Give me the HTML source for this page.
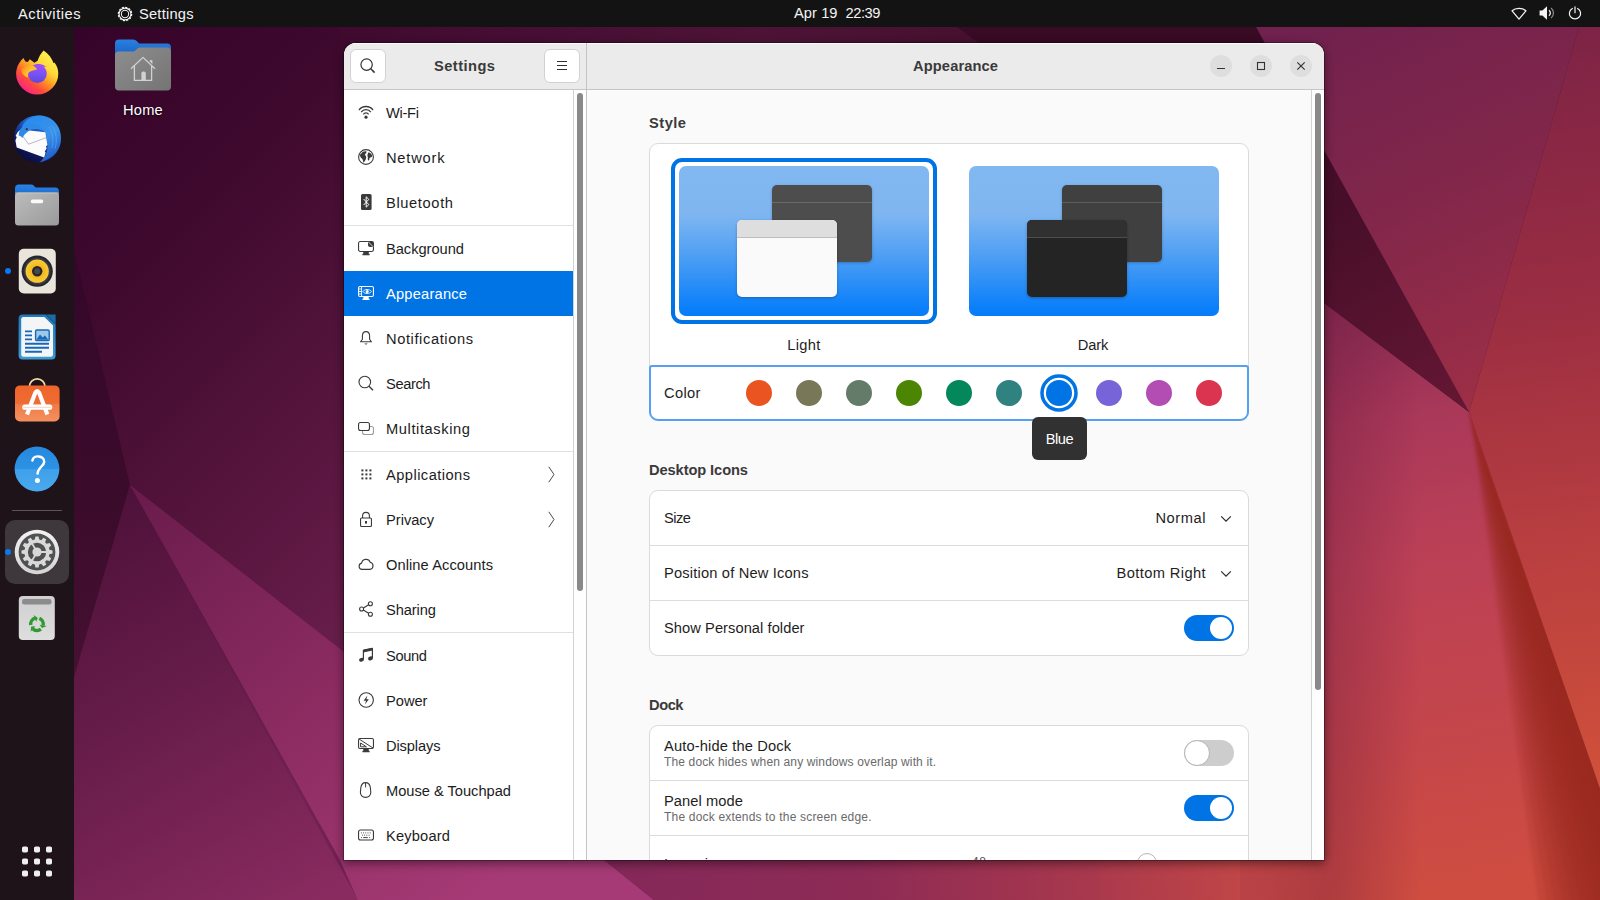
<!DOCTYPE html>
<html lang="en">
<head>
<meta charset="utf-8">
<title>Settings - Appearance</title>
<style>
*{box-sizing:border-box;margin:0;padding:0}
html,body{width:1600px;height:900px;overflow:hidden;background:#3a0a2c}
body{position:relative;font-family:"Liberation Sans",sans-serif;color:#1e1e1e;font-size:14.67px}
.abs{position:absolute}
.f{white-space:nowrap;display:inline-block}
#wall{position:absolute;left:0;top:0;width:1600px;height:900px}
/* ---------- top bar ---------- */
#topbar{position:absolute;left:0;top:0;width:1600px;height:27px;background:#131313;color:#f4f4f4}
#topbar .tx{position:absolute;top:0;height:27px;line-height:28px;white-space:nowrap}
#topbar svg{position:absolute}
/* ---------- dock ---------- */
#dock{position:absolute;left:0;top:27px;width:74px;height:873px;background:#1d1319}
#dock svg{position:absolute;overflow:visible}
.dot{position:absolute;left:5px;width:6px;height:6px;border-radius:50%;background:#0a78ee}
/* desktop icon */
#home{position:absolute;left:100px;top:36px;width:86px;height:90px}
/* ---------- window ---------- */
#shadow{position:absolute;left:344px;top:43px;width:980px;height:817px;border-radius:12px 12px 0 0;box-shadow:0 3px 10px 1px rgba(0,0,0,.42),0 0 0 1px rgba(0,0,0,.3)}
#win{position:absolute;left:344px;top:43px;width:980px;height:817px;border-radius:12px 12px 0 0;overflow:hidden;background:#fafafa}
#hdr{position:absolute;left:0;top:0;width:980px;height:47px;background:#ebebeb;border-bottom:1px solid #c6c6c6;box-shadow:inset 0 1px 0 #fcfcfc}
.hbtn{position:absolute;top:6px;width:36px;height:34px;background:#fff;border:1px solid #d2d2d2;border-radius:6px}
.hbtn svg{position:absolute;left:9px;top:8px}
.wbtn{position:absolute;top:12px;width:22px;height:22px;border-radius:50%;background:#dedede}
.wbtn svg{position:absolute;left:3px;top:3px}
.ttl{position:absolute;top:0;height:46px;line-height:47px;font-weight:bold;color:#3a3a3a;white-space:nowrap}
/* sidebar */
#side{position:absolute;left:0;top:47px;width:229px;height:770px;background:#fff}
#sbar{position:absolute;left:229px;top:47px;width:13px;height:770px;background:#fefefe;border-left:1px solid #d2d2d2}
#vdiv{position:absolute;left:242px;top:0;width:1px;height:817px;background:#c3c3c3}
.row{position:absolute;left:0;width:229px;height:45px}
.row .t{position:absolute;left:42px;top:0;height:45px;line-height:46px;white-space:nowrap;color:#1c1c1c}
.row svg.i{position:absolute;left:14px;top:14px;width:16px;height:16px;overflow:visible}
.row.sel{background:#0073e5}
.row.sel .t{color:#fff}
.sep{position:absolute;left:0;width:229px;height:1px;background:#e0e0e0}
.row svg.chev{position:absolute;left:204px;top:14px;width:7px;height:17px;overflow:visible}
/* content */
#main{position:absolute;left:243px;top:47px;width:737px;height:770px;background:#fafafa;overflow:hidden}
#mbar{position:absolute;left:724px;top:0;width:13px;height:770px;border-left:1px solid #d2d2d2;background:#fefefe}
.h2{position:absolute;left:62px;font-weight:bold;color:#3a3a3a;white-space:nowrap;height:20px;line-height:20px}
.card{position:absolute;left:62px;width:600px;background:#fff;border:1px solid #dadada;border-radius:9px}
.crow{position:absolute;left:0;width:598px;height:55px}
.crow .l{position:absolute;left:14px;top:0;height:55px;line-height:54px;white-space:nowrap}
.crow .l1{position:absolute;left:14px;top:11px;height:18px;line-height:18px;white-space:nowrap}
.crow .l2{position:absolute;left:14px;top:28px;height:16px;line-height:16px;white-space:nowrap;color:#6a6a6a;font-size:12px}
.crow .r{position:absolute;right:42px;top:0;height:55px;line-height:54px;white-space:nowrap}
.csep{position:absolute;left:0;width:598px;height:1px;background:#dcdcdc}
.sw{position:absolute;left:534px;width:50px;height:26px;border-radius:13px}
.sw.on{background:#0073e5}
.sw.on i{position:absolute;left:26px;top:2px;width:22px;height:22px;border-radius:50%;background:#fff}
.sw.off{background:#cdcdcd}
.sw.off i{position:absolute;left:0;top:0;width:26px;height:26px;border-radius:50%;background:#fff;border:1px solid #b4b4b4}
.cc{position:absolute;top:13px;width:26.6px;height:26.6px;margin:-.3px 0 0 -.3px;border-radius:50%}
.thumb{position:absolute;top:22px;width:250px;height:150px;border-radius:7px;background:linear-gradient(#81b8f1 0%,#7fb6f1 32%,#4a9df4 62%,#0a7ffa 95%,#067cf8 100%);overflow:hidden}
.thumb b{position:absolute;display:block;border-radius:5px;overflow:hidden}
</style>
</head>
<body>
<svg id="wall" viewBox="0 0 1600 900">
<defs>
<linearGradient id="gLB" gradientUnits="userSpaceOnUse" x1="74" y1="27" x2="574" y2="527"><stop offset="0" stop-color="#350329"/><stop offset=".3" stop-color="#3f092e"/><stop offset=".55" stop-color="#501239"/><stop offset=".84" stop-color="#651c48"/><stop offset="1" stop-color="#712250"/></linearGradient>
<linearGradient id="gLA" gradientUnits="userSpaceOnUse" x1="60" y1="200" x2="90" y2="800"><stop offset="0" stop-color="#32062a"/><stop offset=".5" stop-color="#3b0b2b"/><stop offset="1" stop-color="#4e1438"/></linearGradient>
<linearGradient id="gLC" gradientUnits="userSpaceOnUse" x1="130" y1="485" x2="480" y2="900"><stop offset="0" stop-color="#691b4c"/><stop offset=".5" stop-color="#8a2b60"/><stop offset="1" stop-color="#a63a76"/></linearGradient>
<linearGradient id="gLD" gradientUnits="userSpaceOnUse" x1="90" y1="480" x2="330" y2="900"><stop offset="0" stop-color="#4b1037"/><stop offset=".5" stop-color="#681d4a"/><stop offset="1" stop-color="#8a2b60"/></linearGradient>
<linearGradient id="gBT" gradientUnits="userSpaceOnUse" x1="600" y1="880" x2="1340" y2="880"><stop offset="0" stop-color="#84285a"/><stop offset=".35" stop-color="#8d2b55"/><stop offset=".62" stop-color="#a4364e"/><stop offset=".85" stop-color="#bc4448" stop-opacity=".9"/><stop offset="1" stop-color="#c64945" stop-opacity="0"/></linearGradient>
<linearGradient id="gTOP" gradientUnits="userSpaceOnUse" x1="340" y1="0" x2="1260" y2="0"><stop offset="0" stop-color="#400a2f"/><stop offset=".45" stop-color="#4d1337"/><stop offset=".72" stop-color="#45102d"/><stop offset="1" stop-color="#370a22"/></linearGradient>
<linearGradient id="gR1" gradientUnits="userSpaceOnUse" x1="1300" y1="27" x2="1480" y2="420"><stop offset="0" stop-color="#70214e"/><stop offset=".5" stop-color="#83274a"/><stop offset="1" stop-color="#9f2f46"/></linearGradient>
<linearGradient id="gR2" gradientUnits="userSpaceOnUse" x1="1540" y1="27" x2="1640" y2="800"><stop offset="0" stop-color="#7d2346"/><stop offset=".35" stop-color="#9a2d42"/><stop offset=".65" stop-color="#b83e40"/><stop offset="1" stop-color="#d2523a"/></linearGradient>
<linearGradient id="gR3" gradientUnits="userSpaceOnUse" x1="1260" y1="40" x2="1460" y2="410"><stop offset="0" stop-color="#380a23"/><stop offset=".5" stop-color="#4a0f2a"/><stop offset="1" stop-color="#641733"/></linearGradient>
<linearGradient id="gR4" gradientUnits="userSpaceOnUse" x1="1330" y1="290" x2="1440" y2="900"><stop offset="0" stop-color="#852951"/><stop offset=".22" stop-color="#a93859"/><stop offset=".45" stop-color="#bb4056"/><stop offset=".75" stop-color="#c5464a"/><stop offset="1" stop-color="#cf4d40"/></linearGradient>
<linearGradient id="gR4h" gradientUnits="userSpaceOnUse" x1="1324" y1="0" x2="1420" y2="0"><stop offset="0" stop-color="#5a1238" stop-opacity=".3"/><stop offset="1" stop-color="#5a1238" stop-opacity="0"/></linearGradient>
<linearGradient id="gR5" gradientUnits="userSpaceOnUse" x1="1534" y1="600" x2="1470" y2="622"><stop offset="0" stop-color="#98281f"/><stop offset=".35" stop-color="#a22c26" stop-opacity=".9"/><stop offset="1" stop-color="#b8383a" stop-opacity="0"/></linearGradient>
<filter id="soft2" color-interpolation-filters="sRGB" x="-30%" y="-10%" width="160%" height="120%"><feGaussianBlur stdDeviation="7"/></filter>
<filter id="soft3" color-interpolation-filters="sRGB" x="-20%" y="-5%" width="140%" height="110%"><feGaussianBlur stdDeviation="1.6"/></filter>
<filter id="soft" color-interpolation-filters="sRGB" x="-5%" y="-5%" width="110%" height="110%"><feGaussianBlur stdDeviation="0.7"/></filter>
</defs>
<rect width="1600" height="900" fill="#4a1033"/>
<g filter="url(#soft)">
<!-- upper-middle large dark facet -->
<polygon points="22,27 1260,27 1260,1000 130,1000 130,485" fill="url(#gLB)"/>
<rect x="340" y="20" width="930" height="60" fill="url(#gTOP)"/>
<!-- far-left dark facet -->
<polygon points="0,27 22,27 130,485 0,937" fill="url(#gLA)"/>
<!-- lower-left facet -->
<polygon points="130,485 -20,1000 420,1000 358,900" fill="url(#gLD)"/>
<!-- light wedge -->
<polygon points="130,485 344,652 604,860 660,905 360,905 340,860" fill="url(#gLC)"/>
<!-- right: pink lower-left facet -->
<polygon points="1100,134.6 1469,412 1620,846 1620,1000 1100,1000" fill="url(#gR4)"/>
<polygon points="1240,240 1469,412 1600,1000 1240,1000" fill="url(#gR4h)"/>
<!-- bottom strip right of wedge -->
<polygon points="604,860 660,905 1340,905 1340,856" fill="url(#gBT)"/>
</g>
<!-- right: dark-red band (soft left edge) -->
<g filter="url(#soft3)" fill="#96261d" fill-opacity=".2"><polygon points="1469,412 1558.8,1045.7 1683.3,1015.1"/><polygon points="1469,412 1569.0,1044.1 1683.3,1015.1"/><polygon points="1469,412 1579.2,1042.4 1683.3,1015.1"/><polygon points="1469,412 1589.4,1040.6 1683.3,1015.1"/><polygon points="1469,412 1599.5,1038.6 1683.3,1015.1"/><polygon points="1469,412 1609.6,1036.4 1683.3,1015.1"/><polygon points="1469,412 1619.6,1034.0 1683.3,1015.1"/><polygon points="1469,412 1629.7,1031.5 1683.3,1015.1"/><polygon points="1469,412 1639.6,1028.8 1683.3,1015.1"/><polygon points="1469,412 1649.6,1026.0 1683.3,1015.1"/><polygon points="1469,412 1659.5,1023.0 1683.3,1015.1"/><polygon points="1469,412 1669.3,1019.9 1683.3,1015.1"/></g>
<g filter="url(#soft)">
<!-- right: dark triangle -->
<polygon points="1256,27 1469,412 900,-16 900,27" fill="url(#gR3)"/>
<!-- right: upper big facet -->
<polygon points="1256,27 1579,27 1469,412" fill="url(#gR1)"/>
<!-- right: far right facet -->
<polygon points="1579,27 1620,27 1620,846 1469,412" fill="url(#gR2)"/>
</g>
</svg>
<!-- TOP BAR -->
<div id="topbar">
<div class="tx" style="left:18px"><span class="f" style="font-size:14.67px;letter-spacing:0.519px;">Activities</span></div>
<svg style="left:116.5px;top:5.5px" width="16" height="16" viewBox="0 0 17 17"><circle cx="8.5" cy="8.5" r="7.1" fill="none" stroke="#f4f4f4" stroke-width="1.3" stroke-dasharray="2.3 1.417"/><circle cx="8.5" cy="8.5" r="6.3" fill="none" stroke="#f4f4f4" stroke-width="1.2"/><circle cx="8.5" cy="8.5" r="3.9" fill="none" stroke="#f4f4f4" stroke-width="1.1"/></svg>
<div class="tx" style="left:139px"><span class="f" style="font-size:14.67px;letter-spacing:0.219px;">Settings</span></div>
<div class="tx" style="left:794px;line-height:26px"><span class="f" style="font-size:14.67px;letter-spacing:0.062px;">Apr 19</span></div>
<div class="tx" style="left:845.5px;line-height:26px"><span class="f" style="font-size:14.67px;letter-spacing:-0.422px;">22:39</span></div>
<!-- network -->
<svg style="left:1511px;top:7px" width="16" height="13.3" viewBox="0 0 18 15"><path d="M1.2 4.3 C5.2 0.6 12.8 0.6 16.8 4.3 L9 13.6 Z" fill="none" stroke="#f4f4f4" stroke-width="1.4" stroke-linejoin="round"/></svg>
<!-- volume -->
<svg style="left:1539px;top:5px" width="16" height="16" viewBox="0 0 16 16"><path d="M0.6 5.4 H3.4 L8 1.2 V14.8 L3.4 10.6 H0.6 Z" fill="#f4f4f4"/><path d="M10 5.2 A3.6 3.6 0 0 1 10 10.8" fill="none" stroke="#f4f4f4" stroke-width="1.3"/><path d="M12 3 A6.3 6.3 0 0 1 12 13" fill="none" stroke="#8d8d8d" stroke-width="1.2"/></svg>
<!-- power -->
<svg style="left:1567.5px;top:5.5px" width="14" height="14" viewBox="0 0 15 15"><path d="M4.7 2.6 A6 6 0 1 0 10.3 2.6" fill="none" stroke="#f4f4f4" stroke-width="1.3" stroke-linecap="round"/><path d="M7.5 0.8 V7.2" stroke="#f4f4f4" stroke-width="1.3" stroke-linecap="round"/></svg>
</div>
<!-- DOCK -->
<div id="dock">
<!-- Firefox: abs 16..58 x 50..94 -->
<svg style="left:13px;top:22px" width="48" height="48" viewBox="0 0 48 48">
<defs>
<linearGradient id="ffg" x1=".86" y1=".12" x2=".22" y2=".95"><stop offset="0" stop-color="#fff350"/><stop offset=".3" stop-color="#ffd93a"/><stop offset=".52" stop-color="#ff9a22"/><stop offset=".74" stop-color="#ff4f38"/><stop offset="1" stop-color="#fb1f8c"/></linearGradient>
<linearGradient id="ffp" x1=".5" y1="0" x2=".45" y2="1"><stop offset="0" stop-color="#a94dff"/><stop offset=".5" stop-color="#7a52f4"/><stop offset="1" stop-color="#5a48e0"/></linearGradient>
<linearGradient id="ffo" x1="0" y1=".2" x2="1" y2=".8"><stop offset="0" stop-color="#ff8a20"/><stop offset=".5" stop-color="#ffc22e"/><stop offset="1" stop-color="#ffae26"/></linearGradient>
</defs>
<path d="M30.6 1.4 C27.6 4.6 25.6 8.2 24.6 11.8 L21.4 13.8 L16.8 10.2 L14.8 13 L12.4 12.4 L10.4 9 C7 12 4.6 16 3.7 20 C3.2 22 3.1 23.4 3.1 24.4 A21.1 21.1 0 0 0 45.3 24.4 C45.3 20 43.6 16 41.4 13.4 L40.6 14.2 C39 9.4 35.6 4.8 30.6 1.4Z" fill="url(#ffg)"/>
<circle cx="24.4" cy="24.6" r="9.4" fill="url(#ffp)"/>
<path d="M21 16.2 C24.6 14.2 29.6 14.6 33.4 18 C31 17.4 29 17.6 27.4 18.6Z" fill="#9b4dfa"/>
<path d="M8.4 20.6 C11.4 16.4 16.8 15.2 20.6 17 C22.2 17.9 23.4 19.1 24.2 20.4 C21.2 21 18.2 21.6 16.2 23 C14.8 24.4 14.6 26.6 15.2 28.8 C10.8 27.2 8 24.2 8.4 20.6Z" fill="url(#ffo)"/>
</svg>
<!-- Thunderbird: abs 13..61 x 115..163 -->
<svg style="left:13px;top:88px" width="48" height="48" viewBox="0 0 48 48">
<defs>
<linearGradient id="tbg" x1=".8" y1=".1" x2=".2" y2=".95"><stop offset="0" stop-color="#2f86e6"/><stop offset=".42" stop-color="#1c4fb8"/><stop offset=".72" stop-color="#10175e"/><stop offset="1" stop-color="#0a0c3a"/></linearGradient>
<linearGradient id="tbw" x1=".3" y1="0" x2=".8" y2="1"><stop offset="0" stop-color="#2a8cee"/><stop offset=".5" stop-color="#3a92ea"/><stop offset="1" stop-color="#1c55c4"/></linearGradient>
</defs>
<circle cx="24.3" cy="24" r="23.6" fill="url(#tbg)"/>
<path d="M9 17 C7.5 9.5 14 2 26 .6 C38.5 .4 48 10 47.9 23 C47.8 34.5 40 44.5 26.5 47.4 C32.6 42.4 35 36 34.4 29.8 C34 24 33.5 20 32.4 17.3 C27 13 20 12.5 14 15.5 Z" fill="url(#tbw)"/>
<path d="M4.7 16.9 L2.6 21 L3.8 22 L2.4 25.6 L3.7 32.4 L31.1 42.4 L32.6 37.8 L31.8 36.4 L33.6 33.4 L33 31.6 L34.4 29.8 L32.4 17.3 L7.9 14.4 Z" fill="#fcfcfd"/>
<path d="M6.6 16.9 L15.6 29.2 L33.1 22.7" fill="none" stroke="#a7a7b6" stroke-width=".8"/>
<path d="M5.6 20.6 C6 13.4 11.4 8.4 18.6 8.2 C24 8.2 28.4 11 30.8 15.6 C25.4 13.2 19.4 13.4 15 16.4 C12.4 18.2 10.6 20.4 9.4 23 C8.4 21.6 7 20.8 5.6 20.6Z" fill="#2c8bea"/>
<path d="M36 12 C40 18 41 26 39 33 M39 10.6 C43.6 17 44.4 26 42 33.6" fill="none" stroke="#55a8f2" stroke-width="1" opacity=".7"/>
<circle cx="13.8" cy="14.2" r="1.1" fill="#4a2a1c"/>
</svg>
<!-- Files: abs 15..59 x 184..226 -->
<svg style="left:13px;top:155px" width="48" height="48" viewBox="0 0 48 48">
<defs>
<linearGradient id="flb" x1="0" y1="0" x2="0" y2="1"><stop offset="0" stop-color="#2b83e4"/><stop offset="1" stop-color="#0d56b8"/></linearGradient>
<linearGradient id="flg" x1="0" y1="0" x2="1" y2="1"><stop offset="0" stop-color="#bcbcbc"/><stop offset="1" stop-color="#9a9a9a"/></linearGradient>
</defs>
<path d="M2 6.5 Q2 2.5 6 2.5 H17.6 Q19.8 2.5 21 3.8 L22.6 5.4 H42 Q46 5.4 46 9.4 V24 H2 Z" fill="url(#flb)"/>
<rect x="2" y="10.4" width="44" height="33.2" rx="3.6" fill="url(#flg)"/>
<rect x="2" y="10.4" width="44" height="1.2" rx=".6" fill="#d4c9b0" opacity=".8"/>
<rect x="17.8" y="17.6" width="12.4" height="3.6" rx="1.7" fill="#fafafa"/>
</svg>
<!-- Rhythmbox: abs 19..56 x 249..293 -->
<div class="dot" style="top:241px"></div>
<svg style="left:13px;top:220px" width="48" height="48" viewBox="0 0 48 48">
<defs>
<radialGradient id="rby" cx=".5" cy=".5" r=".5"><stop offset="0" stop-color="#e8a20c"/><stop offset=".55" stop-color="#f4bc20"/><stop offset="1" stop-color="#f8cc3a"/></radialGradient>
</defs>
<rect x="5.8" y="1.8" width="37" height="44.6" rx="5" fill="#e9e5da"/>
<circle cx="24.2" cy="24.2" r="15.6" fill="#26262e"/>
<circle cx="24.2" cy="24.2" r="13.4" fill="#3a3a44"/>
<circle cx="24.2" cy="24.2" r="11.6" fill="url(#rby)"/>
<circle cx="24.2" cy="24.2" r="5.2" fill="#25252b"/>
<circle cx="24.2" cy="24.2" r="3" fill="#46464c"/>
</svg>
<!-- Writer: abs 19..56 x 314..359 -->
<svg style="left:13px;top:286px" width="48" height="48" viewBox="0 0 48 48">
<defs>
<linearGradient id="wrb" x1="0" y1="0" x2="0" y2="1"><stop offset="0" stop-color="#1f7ab8"/><stop offset=".5" stop-color="#2a8ac8"/><stop offset="1" stop-color="#3a9ad4"/></linearGradient>
</defs>
<path d="M9.6 1.4 H32.6 L42.6 11.4 V42.4 Q42.6 46.4 38.6 46.4 H9.6 Q5.6 46.4 5.6 42.4 V5.4 Q5.6 1.4 9.6 1.4Z" fill="url(#wrb)"/>
<path d="M10.4 4 H31.4 L40 12.6 V41.6 Q40 43.8 37.8 43.8 H10.4 Q8.2 43.8 8.2 41.6 V6.2 Q8.2 4 10.4 4Z" fill="#f3f5f7"/>
<path d="M33 1.4 H42.6 V11 Z" fill="#1a6ca8"/>
<path d="M12 18.4 h7 M12 22.4 h7 M12 26.4 h7 M12 30.8 h24 M12 34.8 h24 M12 38.8 h17" stroke="#1868b8" stroke-width="1.9"/>
<rect x="22.6" y="17" width="13.6" height="10.6" rx="1.2" fill="#9cc8ea" stroke="#1868b8" stroke-width="1.4"/>
<path d="M23.4 26.8 L27 21.6 L29.6 24.6 L32 22.4 L35.4 26.8Z" fill="#1868b8"/>
</svg>
<!-- Software: abs 15..59.5 x 379..421 -->
<svg style="left:13px;top:350px" width="48" height="48" viewBox="0 0 48 48">
<defs>
<linearGradient id="swg" x1="0" y1="0" x2="0" y2="1"><stop offset="0" stop-color="#f0642a"/><stop offset=".5" stop-color="#ee6c34"/><stop offset=".52" stop-color="#f07a46"/><stop offset="1" stop-color="#f3915f"/></linearGradient>
</defs>
<path d="M16.4 11 V9.6 A7.8 7.8 0 0 1 32 9.6 V11" fill="none" stroke="#f6d9a4" stroke-width="1.8"/>
<rect x="2" y="8.4" width="44.6" height="36" rx="5" fill="url(#swg)"/>
<path d="M14 37.4 L22.4 15.6 Q24.2 12.6 26 15.6 L34.4 37.4" fill="none" stroke="#fdfdfd" stroke-width="4.2" stroke-linejoin="round"/>
<rect x="9.2" y="27.6" width="30" height="5.2" rx="2.6" fill="#fff"/>
<rect x="10.2" y="29.8" width="28" height="1" fill="#ead8ce"/>
</svg>
<!-- Help: abs center (37,469) r 22.4 -->
<svg style="left:13px;top:418px" width="48" height="48" viewBox="0 0 48 48">
<defs>
<linearGradient id="hpg" x1="0" y1="0" x2="0" y2="1"><stop offset="0" stop-color="#2788de"/><stop offset=".5" stop-color="#2c92e4"/><stop offset=".51" stop-color="#3f9fe9"/><stop offset="1" stop-color="#4aa9ee"/></linearGradient>
</defs>
<circle cx="24" cy="24" r="22.4" fill="url(#hpg)"/>
<path d="M19.4 15.4 C20 12.4 23 11.2 25.6 11.4 C29 11.6 31.4 13.8 31.2 16.8 C31 21 25 22.4 24.6 28.6" fill="none" stroke="#fff" stroke-width="2.5" stroke-linecap="round"/>
<circle cx="24.4" cy="35.6" r="2.5" fill="#fff"/>
</svg>
<!-- separator -->
<div class="abs" style="left:12px;top:483px;width:50px;height:1px;background:#5d545a"></div>
<!-- Settings (active) -->
<div class="abs" style="left:5px;top:493px;width:64px;height:64px;border-radius:10px;background:#3e373c"></div>
<div class="dot" style="top:522px"></div>
<svg style="left:13px;top:501px" width="48" height="48" viewBox="0 0 48 48">
<defs><linearGradient id="stw" x1="0" y1="0" x2="0" y2="1"><stop offset="0" stop-color="#f2f2f2"/><stop offset="1" stop-color="#d4d4d4"/></linearGradient></defs>
<circle cx="24" cy="24" r="22.3" fill="url(#stw)"/>
<circle cx="24" cy="24" r="18.4" fill="#515151"/>
<path d="M36.39 21.73 L39.52 22.43 L39.52 25.57 L36.39 26.27 L35.87 28.23 L38.23 30.40 L36.66 33.12 L33.60 32.16 L32.16 33.60 L33.12 36.66 L30.40 38.23 L28.23 35.87 L26.27 36.39 L25.57 39.52 L22.43 39.52 L21.73 36.39 L19.77 35.87 L17.60 38.23 L14.88 36.66 L15.84 33.60 L14.40 32.16 L11.34 33.12 L9.77 30.40 L12.13 28.23 L11.61 26.27 L8.48 25.57 L8.48 22.43 L11.61 21.73 L12.13 19.77 L9.77 17.60 L11.34 14.88 L14.40 15.84 L15.84 14.40 L14.88 11.34 L17.60 9.77 L19.77 12.13 L21.73 11.61 L22.43 8.48 L25.57 8.48 L26.27 11.61 L28.23 12.13 L30.40 9.77 L33.12 11.34 L32.16 14.40 L33.60 15.84 L36.66 14.88 L38.23 17.60 L35.87 19.77Z" fill="#d9d9d9"/>
<circle cx="24" cy="24" r="9.2" fill="#515151"/>
<path d="M24 24 L34 24 M24 24 L19 15.4 M24 24 L19 32.6" stroke="#d9d9d9" stroke-width="1.8"/>
<circle cx="24" cy="24" r="4.6" fill="#d9d9d9"/>
</svg>
<!-- Trash: abs 19..55 x 596..640 -->
<svg style="left:13px;top:567px" width="48" height="48" viewBox="0 0 48 48">
<defs><linearGradient id="trg" x1="0" y1="0" x2="0" y2="1"><stop offset="0" stop-color="#cfcfcf"/><stop offset="1" stop-color="#dedede"/></linearGradient></defs>
<rect x="5.8" y="2" width="36" height="44" rx="4" fill="url(#trg)"/>
<rect x="9" y="5" width="29.6" height="5.6" rx="2.4" fill="#8c8c8c"/>
<path d="M26.36 24.36 A6.3 6.3 0 0 1 30.16 31.51 M27.88 35.16 A6.3 6.3 0 0 1 19.78 34.88 M17.76 31.08 A6.3 6.3 0 0 1 22.05 24.21" fill="none" stroke="#2e9a30" stroke-width="3.4"/><path d="M28.96 34.08 L33.75 31.92 L26.66 30.67Z M18.16 32.56 L17.64 37.78 L22.26 32.27Z M24.88 23.96 L20.61 20.90 L23.08 27.66Z" fill="#2e9a30"/>
</svg>
<!-- App grid -->
<svg style="left:13px;top:810px" width="48" height="48" viewBox="0 0 48 48" fill="#efefef">
<rect x="9" y="9.4" width="6" height="6" rx="1.6"/><rect x="21" y="9.4" width="6" height="6" rx="1.6"/><rect x="33" y="9.4" width="6" height="6" rx="1.6"/>
<rect x="9" y="21.4" width="6" height="6" rx="1.6"/><rect x="21" y="21.4" width="6" height="6" rx="1.6"/><rect x="33" y="21.4" width="6" height="6" rx="1.6"/>
<rect x="9" y="33.4" width="6" height="6" rx="1.6"/><rect x="21" y="33.4" width="6" height="6" rx="1.6"/><rect x="33" y="33.4" width="6" height="6" rx="1.6"/>
</svg>
</div>
<!-- Desktop Home icon -->
<svg class="abs" style="left:113px;top:37px;overflow:visible" width="60" height="56" viewBox="0 0 60 56">
<defs>
<linearGradient id="hmb" x1="0" y1="0" x2="0" y2="1"><stop offset="0" stop-color="#2a80e0"/><stop offset="1" stop-color="#0e58ba"/></linearGradient>
<linearGradient id="hmg" x1="0" y1="0" x2="1" y2="1"><stop offset="0" stop-color="#8e8e8e"/><stop offset="1" stop-color="#747474"/></linearGradient>
</defs>
<path d="M2 6.5 Q2 2.5 6 2.5 H20 Q22.4 2.5 24 4.2 L26 6.4 H54 Q58 6.4 58 10.4 V26 H2 Z" fill="url(#hmb)"/>
<path d="M2 18.2 Q2 14.6 5.6 14.6 H19 Q21 14.6 22.4 13.4 L24.2 11.8 Q25.6 10.6 27.6 10.6 H54 Q58 10.6 58 14.6 V49.6 Q58 53.6 54 53.6 H6 Q2 53.6 2 49.6Z" fill="url(#hmg)"/>
<path d="M18 31.8 L30 20.4 L42 31.8 M21.4 29 V43.4 H38.6 V29" fill="none" stroke="#d2d2d2" stroke-width="1.3" stroke-linejoin="round"/><path d="M28.4 43.4 V36.2 Q28.4 34.4 30.2 34.4 H31 Q32.8 34.4 32.8 36.2 V43.4Z M36.4 24 Q37.6 22.6 39.4 23.4 L39.4 27Z" fill="#d2d2d2"/>
</svg>
<div class="abs" style="left:103px;top:99px;width:80px;height:22px;line-height:22px;text-align:center;color:#fff;text-shadow:0 1px 2px rgba(0,0,0,.8)"><span class="f" style="font-size:14.67px;letter-spacing:0.230px;">Home</span></div>
<!-- WINDOW -->
<div id="shadow"></div>
<div id="win">
<div id="hdr">
<div class="hbtn" style="left:6px"><svg width="16" height="16" viewBox="0 0 16 16"><circle cx="6.6" cy="6.6" r="5.7" fill="none" stroke="#333" stroke-width="1.2"/><path d="M10.8 10.8 L14.6 14.6" stroke="#333" stroke-width="1.5"/></svg></div>
<div class="ttl" style="left:90px"><span class="f" style="font-size:14.67px;font-weight:700;letter-spacing:0.453px;">Settings</span></div>
<div class="hbtn" style="left:200px"><svg width="16" height="16" viewBox="0 0 16 16"><path d="M3 3.5 h10 M3 7.5 h10 M3 11.5 h10" stroke="#2e2e2e" stroke-width="1"/></svg></div>
<div class="ttl" style="left:569px"><span class="f" style="font-size:14.67px;font-weight:700;letter-spacing:0.122px;">Appearance</span></div>
<div class="wbtn" style="left:866px"><svg width="16" height="16" viewBox="0 0 16 16"><path d="M4 10.5 h8" stroke="#333" stroke-width="1.1"/></svg></div>
<div class="wbtn" style="left:906px"><svg width="16" height="16" viewBox="0 0 16 16"><rect x="4.5" y="4.5" width="7" height="7" fill="none" stroke="#333" stroke-width="1.1"/></svg></div>
<div class="wbtn" style="left:946px"><svg width="16" height="16" viewBox="0 0 16 16"><path d="M4.3 4.3 L11.7 11.7 M11.7 4.3 L4.3 11.7" stroke="#333" stroke-width="1.2"/></svg></div>
</div>
<div id="side">
<div class="row" style="top:0"><svg class="i" viewBox="0 0 16 16"><path d="M1 6 A8.75 8.75 0 0 1 15 6 M3.2 8.2 A5.86 5.86 0 0 1 12.8 8.2 M5.4 10.4 A3 3 0 0 1 10.6 10.4" fill="none" stroke="#3a3a3a" stroke-width="1.3"/><circle cx="8" cy="13.2" r="1.6" fill="#3a3a3a"/></svg><div class="t"><span class="f" style="font-size:14.67px;letter-spacing:-0.297px;">Wi-Fi</span></div></div>
<div class="row" style="top:45px"><svg class="i" viewBox="0 0 16 16"><circle cx="8" cy="8" r="7.4" fill="none" stroke="#3a3a3a" stroke-width="1.1"/><path d="M3.2 4.4 C4.6 2.6 7 1.8 8.6 2.6 C8.8 4.2 7.4 4.8 6.8 5.8 C7.8 6.8 8.6 8 8 9.6 C7.4 11.2 6.8 12.8 5.6 13.8 C5 12.4 4.8 10.8 4.2 9.8 C2.8 8.8 1.8 7.2 2 5.8Z M10.6 3.2 C12.6 3.8 14 5.4 14.2 7.4 C13.2 8.6 12.2 8 11.6 9 C11.2 10 11.6 11.2 10.8 11.8 C9.8 10.8 9.4 9.6 10 8.2 C9 7 9.4 4.8 10.6 3.2Z" fill="#3a3a3a"/></svg><div class="t"><span class="f" style="font-size:14.67px;letter-spacing:0.789px;">Network</span></div></div>
<div class="row" style="top:90px"><svg class="i" viewBox="0 0 16 16"><rect x="3" y="0" width="10.6" height="16" rx="1.6" fill="#3a3a3a"/><path d="M5.6 5 L10.8 10.6 L8.2 13.2 V2.8 L10.8 5.4 L5.6 11" fill="none" stroke="#fff" stroke-width="1"/></svg><div class="t"><span class="f" style="font-size:14.67px;letter-spacing:0.633px;">Bluetooth</span></div></div>
<div class="sep" style="top:135px"></div>
<div class="row" style="top:136px"><svg class="i" viewBox="0 0 16 16"><rect x=".55" y="1.55" width="14.9" height="9.9" rx="1.6" fill="none" stroke="#3a3a3a" stroke-width="1.1"/><path d="M10 1.5 H14 Q15.5 1.5 15.5 3 V7 H12 Q10 7 10 5Z" fill="#3a3a3a"/><path d="M10.2 1.8 L15.2 6.8" stroke="#fff" stroke-width=".8"/><path d="M6 11.5 V13.6 H10 V11.5 M4.4 14.4 H11.6" stroke="#3a3a3a" stroke-width="1.5" fill="#3a3a3a"/></svg><div class="t"><span class="f" style="font-size:14.67px;letter-spacing:-0.026px;">Background</span></div></div>
<div class="row sel" style="top:181px"><svg class="i" viewBox="0 0 16 16"><rect x=".55" y="1.55" width="14.9" height="9.9" rx="1.4" fill="none" stroke="#fff" stroke-width="1.1"/><path d="M3.6 2 V11 M1 4 h2.4 M1 6.5 h2.4 M1 9 h2.4" stroke="#fff" stroke-width=".9"/><path d="M5 6.5 C6.6 3.8 11.6 3.8 13.4 6.5 C11.6 9.2 6.6 9.2 5 6.5Z" fill="none" stroke="#fff" stroke-width=".9"/><circle cx="9.2" cy="6.5" r="1.5" fill="#fff"/><path d="M6 11.5 V13.6 H10 V11.5 M4.4 14.4 H11.6" stroke="#fff" stroke-width="1.4" fill="#fff"/></svg><div class="t"><span class="f" style="font-size:14.67px;letter-spacing:0.217px;">Appearance</span></div></div>
<div class="row" style="top:226px"><svg class="i" viewBox="0 0 16 16"><path d="M8 1.6 C5.6 1.6 4.4 3.4 4.4 6 V9.2 L2.6 11.8 H13.4 L11.6 9.2 V6 C11.6 3.4 10.4 1.6 8 1.6Z" fill="none" stroke="#3a3a3a" stroke-width="1.1" stroke-linejoin="round"/><path d="M6.4 13.4 A1.7 1.7 0 0 0 9.6 13.4Z" fill="#3a3a3a"/></svg><div class="t"><span class="f" style="font-size:14.67px;letter-spacing:0.596px;">Notifications</span></div></div>
<div class="row" style="top:271px"><svg class="i" viewBox="0 0 16 16"><circle cx="6.8" cy="7" r="5.8" fill="none" stroke="#3a3a3a" stroke-width="1.1"/><path d="M11 11.2 L15 15.2" stroke="#3a3a3a" stroke-width="1.4"/></svg><div class="t"><span class="f" style="font-size:14.67px;letter-spacing:-0.391px;">Search</span></div></div>
<div class="row" style="top:316px"><svg class="i" viewBox="0 0 16 16"><rect x="4.55" y="6.55" width="10.9" height="7.9" rx="2" fill="none" stroke="#9c9c9c" stroke-width="1.1"/><rect x=".55" y="2.55" width="10.9" height="7.9" rx="2" fill="#fff" stroke="#3a3a3a" stroke-width="1.1"/></svg><div class="t"><span class="f" style="font-size:14.67px;letter-spacing:0.601px;">Multitasking</span></div></div>
<div class="sep" style="top:361px"></div>
<div class="row" style="top:362px"><svg class="i" viewBox="0 0 16 16" fill="#3a3a3a"><rect x="3.4" y="3.4" width="2" height="2"/><rect x="7.4" y="3.4" width="2" height="2"/><rect x="11.4" y="3.4" width="2" height="2"/><rect x="3.4" y="7.4" width="2" height="2"/><rect x="7.4" y="7.4" width="2" height="2"/><rect x="11.4" y="7.4" width="2" height="2"/><rect x="3.4" y="11.4" width="2" height="2"/><rect x="7.4" y="11.4" width="2" height="2"/><rect x="11.4" y="11.4" width="2" height="2"/></svg><div class="t"><span class="f" style="font-size:14.67px;letter-spacing:0.452px;">Applications</span></div><svg class="chev" viewBox="0 0 7 17"><path d="M.8 .8 L6 8.5 L.8 16.2" fill="none" stroke="#4a4a4a" stroke-width="1"/></svg></div>
<div class="row" style="top:407px"><svg class="i" viewBox="0 0 16 16"><rect x="2.55" y="7.05" width="10.9" height="8.4" rx="1" fill="none" stroke="#3a3a3a" stroke-width="1.1"/><path d="M4.6 7 V4.8 A3.4 3.4 0 0 1 11.4 4.8 V7" fill="none" stroke="#3a3a3a" stroke-width="1.1"/><rect x="7" y="10" width="2" height="2.6" fill="#3a3a3a"/></svg><div class="t"><span class="f" style="font-size:14.67px;letter-spacing:-0.010px;">Privacy</span></div><svg class="chev" viewBox="0 0 7 17"><path d="M.8 .8 L6 8.5 L.8 16.2" fill="none" stroke="#4a4a4a" stroke-width="1"/></svg></div>
<div class="row" style="top:452px"><svg class="i" viewBox="0 0 16 16"><path d="M4 13.4 A3.2 3.2 0 0 1 3.6 7.1 A4.5 4.5 0 0 1 12.2 6.2 A3.7 3.7 0 0 1 12.2 13.4 Z" fill="none" stroke="#3a3a3a" stroke-width="1.1" stroke-linejoin="round"/></svg><div class="t"><span class="f" style="font-size:14.67px;letter-spacing:0.077px;">Online Accounts</span></div></div>
<div class="row" style="top:497px"><svg class="i" viewBox="0 0 16 16" fill="none" stroke="#3a3a3a" stroke-width="1.1"><circle cx="3.6" cy="8" r="2"/><circle cx="12.4" cy="2.8" r="2"/><circle cx="12.4" cy="13.2" r="2"/><path d="M5.4 7 L10.6 3.8 M5.4 9 L10.6 12.2"/></svg><div class="t"><span class="f" style="font-size:14.67px;letter-spacing:-0.089px;">Sharing</span></div></div>
<div class="sep" style="top:542px"></div>
<div class="row" style="top:543px"><svg class="i" viewBox="0 0 16 16"><path d="M5.4 12.4 V3.4 L14.4 1.6 V11" fill="none" stroke="#3a3a3a" stroke-width="1.2"/><path d="M5.4 2.6 L14.4 .8 V3.6 L5.4 5.4Z" fill="#3a3a3a"/><ellipse cx="3.5" cy="12.8" rx="2.5" ry="1.9" transform="rotate(-18 3.5 12.8)" fill="#3a3a3a"/><ellipse cx="12.5" cy="11.4" rx="2.5" ry="1.9" transform="rotate(-18 12.5 11.4)" fill="#3a3a3a"/></svg><div class="t"><span class="f" style="font-size:14.67px;letter-spacing:-0.348px;">Sound</span></div></div>
<div class="row" style="top:588px"><svg class="i" viewBox="0 0 16 16"><circle cx="8.2" cy="8" r="7.2" fill="none" stroke="#3a3a3a" stroke-width="1.1"/><path d="M9.4 3.4 L5.6 8.8 H8 L7 12.6 L10.8 7.2 H8.4Z" fill="#3a3a3a"/></svg><div class="t"><span class="f" style="font-size:14.67px;letter-spacing:-0.012px;">Power</span></div></div>
<div class="row" style="top:633px"><svg class="i" viewBox="0 0 16 16"><rect x=".55" y="1.55" width="14.9" height="9.9" rx="1.4" fill="none" stroke="#3a3a3a" stroke-width="1.1"/><path d="M1 2 L15 11" stroke="#3a3a3a" stroke-width="1"/><path d="M2.6 6 V9.8 H8.4Z" fill="none" stroke="#3a3a3a" stroke-width="1"/><path d="M6 11.5 V13.6 H10 V11.5 M4.4 14.4 H11.6" stroke="#3a3a3a" stroke-width="1.5" fill="#3a3a3a"/></svg><div class="t"><span class="f" style="font-size:14.67px;letter-spacing:-0.127px;">Displays</span></div></div>
<div class="row" style="top:678px"><svg class="i" viewBox="0 0 16 16"><path d="M7.6 .6 C5 .6 3.2 2.6 2.8 6 L2.4 10 C2.2 13.2 4.4 15.4 7.6 15.4 C10.8 15.4 13 13.2 12.8 10 L12.4 6 C12 2.6 10.2 .6 7.6 .6Z" fill="none" stroke="#3a3a3a" stroke-width="1.1"/><path d="M7.6 1 V5.4" stroke="#3a3a3a" stroke-width="1"/></svg><div class="t"><span class="f" style="font-size:14.67px;letter-spacing:-0.015px;">Mouse &amp; Touchpad</span></div></div>
<div class="row" style="top:723px"><svg class="i" viewBox="0 0 16 16"><rect x=".55" y="3.05" width="14.9" height="9.9" rx="2" fill="none" stroke="#3a3a3a" stroke-width="1.1"/><path d="M2.9 5.9 h.9 M5.1 5.9 h.9 M7.3 5.9 h.9 M9.5 5.9 h.9 M11.7 5.9 h.9 M4 8.2 h.9 M6.2 8.2 h.9 M8.4 8.2 h.9 M10.6 8.2 h.9 M3 10.6 h.9 M5.2 10.6 h4.6 M11.2 10.6 h.9" stroke="#3a3a3a" stroke-width=".95"/></svg><div class="t"><span class="f" style="font-size:14.67px;letter-spacing:0.179px;">Keyboard</span></div></div>
</div>
<div id="sbar"><div class="abs" style="left:3px;top:3px;width:6px;height:498px;border-radius:3px;background:#898989"></div></div>
<div id="vdiv"></div>
<div id="main">
<div class="h2" style="top:23px"><span class="f" style="font-size:14.67px;font-weight:700;letter-spacing:0.492px;">Style</span></div>
<div class="card" style="top:53px;height:278px">
<div class="abs" style="left:21px;top:14px;width:266px;height:166px;border:4px solid #0073e5;border-radius:11px"></div>
<div class="thumb" style="left:29px">
<b style="left:93px;top:19px;width:100px;height:77px;background:#4d4d4d;box-shadow:0 1px 3px rgba(0,0,0,.25)"><i class="abs" style="left:0;top:17px;width:100px;height:1px;background:#686868"></i></b>
<b style="left:58px;top:54px;width:100px;height:77px;background:#fafafa;box-shadow:0 1px 3px rgba(0,0,0,.25)"><i class="abs" style="left:0;top:0;width:100px;height:17px;background:#dedede"></i><i class="abs" style="left:0;top:17px;width:100px;height:1px;background:#bdbdbd"></i></b>
</div>
<div class="thumb" style="left:319px">
<b style="left:93px;top:19px;width:100px;height:77px;background:#404040;box-shadow:0 1px 3px rgba(0,0,0,.25)"><i class="abs" style="left:0;top:17px;width:100px;height:1px;background:#5c5c5c"></i></b>
<b style="left:58px;top:54px;width:100px;height:77px;background:#242424;box-shadow:0 1px 3px rgba(0,0,0,.3)"><i class="abs" style="left:0;top:0;width:100px;height:17px;background:#303030"></i><i class="abs" style="left:0;top:17px;width:100px;height:1px;background:#4c4c4c"></i></b>
</div>
<div class="abs" style="left:104px;top:191px;width:100px;height:20px;line-height:20px;text-align:center"><span class="f" style="font-size:14.67px;letter-spacing:0.301px;">Light</span></div>
<div class="abs" style="left:393px;top:191px;width:100px;height:20px;line-height:20px;text-align:center"><span class="f" style="font-size:14.67px;letter-spacing:-0.151px;">Dark</span></div>
<!-- color row with focus ring -->
<div class="abs" style="left:-1px;top:221px;width:600px;height:56px;border:2px solid #55a1f0;border-radius:3px 3px 9px 9px"></div>
<div class="abs" style="left:14px;top:222px;height:54px;line-height:55px"><span class="f" style="font-size:14.67px;letter-spacing:0.367px;">Color</span></div>
<div class="cc" style="left:96px;top:236px;background:#e95420"></div>
<div class="cc" style="left:146px;top:236px;background:#787859"></div>
<div class="cc" style="left:196px;top:236px;background:#657b69"></div>
<div class="cc" style="left:246px;top:236px;background:#4b8501"></div>
<div class="cc" style="left:296px;top:236px;background:#03875b"></div>
<div class="cc" style="left:346px;top:236px;background:#308280"></div>
<svg class="abs" style="left:389px;top:229px" width="40" height="40" viewBox="0 0 40 40"><circle cx="20" cy="20" r="17" fill="none" stroke="#0073e5" stroke-width="3.5"/></svg>
<div class="cc" style="left:396px;top:236px;background:#0073e5"></div>
<div class="cc" style="left:446px;top:236px;background:#7764d8"></div>
<div class="cc" style="left:496px;top:236px;background:#b34cb3"></div>
<div class="cc" style="left:546px;top:236px;background:#da3450"></div>
</div>
<!-- tooltip -->
<div class="abs" style="left:445px;top:327px;width:55px;height:43px;border-radius:6px;background:#313131;color:#fff;text-align:center;line-height:45px;z-index:5"><span class="f" style="font-size:14.67px;letter-spacing:-0.448px;">Blue</span></div>

<div class="h2" style="top:370px"><span class="f" style="font-size:14.67px;font-weight:700;letter-spacing:-0.099px;">Desktop Icons</span></div>
<div class="card" style="top:400px;height:166px">
<div class="crow" style="top:0"><div class="l"><span class="f" style="font-size:14.67px;letter-spacing:-0.505px;">Size</span></div><div class="r"><span class="f" style="font-size:14.67px;letter-spacing:0.553px;">Normal</span></div><svg class="abs" style="left:570px;top:24px" width="12" height="8" viewBox="0 0 12 8"><path d="M1.2 1.4 L6 6.2 L10.8 1.4" fill="none" stroke="#2a2a2a" stroke-width="1.2"/></svg></div>
<div class="csep" style="top:54px"></div>
<div class="crow" style="top:55px"><div class="l"><span class="f" style="font-size:14.67px;letter-spacing:0.178px;">Position of New Icons</span></div><div class="r"><span class="f" style="font-size:14.67px;letter-spacing:0.389px;">Bottom Right</span></div><svg class="abs" style="left:570px;top:24px" width="12" height="8" viewBox="0 0 12 8"><path d="M1.2 1.4 L6 6.2 L10.8 1.4" fill="none" stroke="#2a2a2a" stroke-width="1.2"/></svg></div>
<div class="csep" style="top:109px"></div>
<div class="crow" style="top:110px"><div class="l"><span class="f" style="font-size:14.67px;letter-spacing:0.062px;">Show Personal folder</span></div><div class="sw on" style="top:14px"><i></i></div></div>
</div>

<div class="h2" style="top:605px"><span class="f" style="font-size:14.67px;font-weight:700;letter-spacing:-0.448px;">Dock</span></div>
<div class="card" style="top:635px;height:200px">
<div class="crow" style="top:0"><div class="l1"><span class="f" style="font-size:14.67px;letter-spacing:0.138px;">Auto-hide the Dock</span></div><div class="l2"><span class="f" style="font-size:12px;letter-spacing:0.139px;">The dock hides when any windows overlap with it.</span></div><div class="sw off" style="top:14px"><i></i></div></div>
<div class="csep" style="top:54px"></div>
<div class="crow" style="top:55px"><div class="l1"><span class="f" style="font-size:14.67px;letter-spacing:0.085px;">Panel mode</span></div><div class="l2"><span class="f" style="font-size:12px;letter-spacing:0.192px;">The dock extends to the screen edge.</span></div><div class="sw on" style="top:14px"><i></i></div></div>
<div class="csep" style="top:109px"></div>
<div class="crow" style="top:110px"><div class="l" style="top:1px"><span class="f" style="font-size:14.67px;letter-spacing:0.270px;">Icon size</span></div><div class="abs" style="left:322px;top:-1px;height:55px;line-height:54px;font-size:12px;color:#555"><span class="f" style="font-size:12px;letter-spacing:0.641px;">48</span></div><div class="abs" style="left:487px;top:17px;width:20px;height:20px;border-radius:50%;border:1px solid #b5b5b5;background:#fff"></div></div>
</div>
<div id="mbar"><div class="abs" style="left:3px;top:3px;width:6px;height:597px;border-radius:3px;background:#898989"></div></div>
</div>
</div>
</body>
</html>
